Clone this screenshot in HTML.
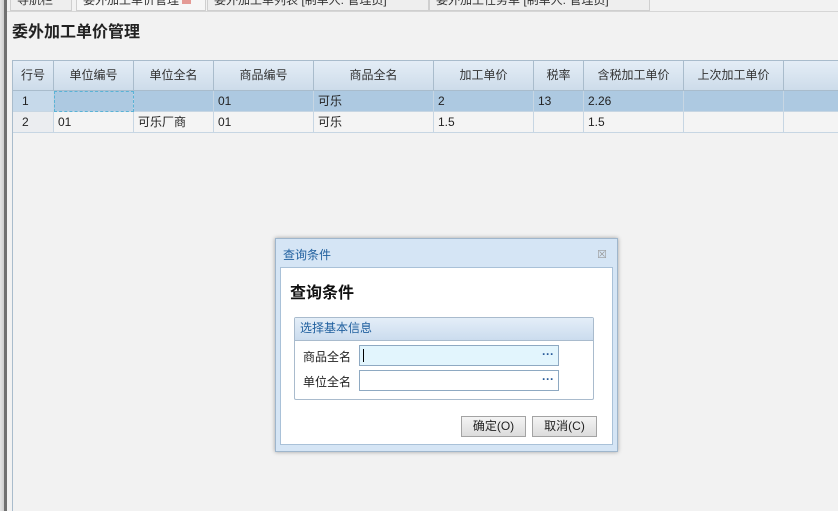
<!DOCTYPE html>
<html><head><meta charset="utf-8"><style>
*{margin:0;padding:0;box-sizing:border-box}
html,body{width:838px;height:511px;overflow:hidden}
body{background:#f2f2f2;font-family:"Liberation Sans","Noto Sans CJK SC",sans-serif;font-size:12px;color:#222;position:relative}
.abs{position:absolute}
.tab{position:absolute;top:-8px;height:19px;border:1px solid #cfcfcf;background:#eeeeee;font-size:12px;line-height:14px;color:#333;padding-left:6px;overflow:hidden;white-space:nowrap}
.grid{position:absolute;left:12px;top:60px;width:826px;height:451px;border-left:1px solid #a9bccc;border-top:1px solid #a9bccc}
.c{position:absolute;border-right:1px solid #c7d6e3;white-space:nowrap;overflow:hidden}
.h{top:0;height:30px;background:linear-gradient(#e4edf6,#cddcea);border-right:1px solid #a9bccc;border-bottom:1px solid #a9bccc;text-align:center;line-height:29px;color:#333}
.r1{top:30px;height:21px;background:#adc9e1;line-height:21px;padding-left:4px;border-bottom:1px solid #c7d6e3}
.r2{top:51px;height:21px;background:#f4f4f4;line-height:21px;padding-left:4px;border-bottom:1px solid #c7d6e3}
</style></head><body>
<div class="abs" style="left:0;top:0;width:5px;height:511px;background:linear-gradient(90deg,#e4e4e4,#c8c8c8)"></div>
<div class="abs" style="left:4px;top:0;width:3px;height:511px;background:#707070"></div>
<div class="tab" style="left:10px;width:62px">导航栏</div>
<div class="tab" style="left:76px;width:130px;background:#f6f6f6">委外加工单价管理 <span style="display:inline-block;width:9px;height:8px;background:#e49a95"></span></div>
<div class="tab" style="left:207px;width:222px">委外加工单列表 [制单人: 管理员]</div>
<div class="tab" style="left:429px;width:221px">委外加工任务单 [制单人: 管理员]</div>
<div class="abs" style="left:7px;top:11px;width:831px;height:1px;background:#d6d6d6"></div>
<div class="abs" style="left:12px;top:18px;font-size:16px;font-weight:bold;color:#222">委外加工单价管理</div>
<div class="grid">
<div class="c h" style="left:0;width:41px">行号</div>
<div class="c h" style="left:41px;width:80px">单位编号</div>
<div class="c h" style="left:121px;width:80px">单位全名</div>
<div class="c h" style="left:201px;width:100px">商品编号</div>
<div class="c h" style="left:301px;width:120px">商品全名</div>
<div class="c h" style="left:421px;width:100px">加工单价</div>
<div class="c h" style="left:521px;width:50px">税率</div>
<div class="c h" style="left:571px;width:100px">含税加工单价</div>
<div class="c h" style="left:671px;width:100px">上次加工单价</div>
<div class="c h" style="left:771px;width:60px"></div>
<div class="c r1" style="left:0;width:41px;background:#c6d9ea;padding-left:9px">1</div>
<div class="c r1" style="left:41px;width:80px;outline:1px dashed #5ab3d6;outline-offset:-1px"></div>
<div class="c r1" style="left:121px;width:80px"></div>
<div class="c r1" style="left:201px;width:100px">01</div>
<div class="c r1" style="left:301px;width:120px">可乐</div>
<div class="c r1" style="left:421px;width:100px">2</div>
<div class="c r1" style="left:521px;width:50px">13</div>
<div class="c r1" style="left:571px;width:100px">2.26</div>
<div class="c r1" style="left:671px;width:100px"></div>
<div class="c r1" style="left:771px;width:60px"></div>
<div class="c r2" style="left:0;width:41px;background:#ebedf0;padding-left:9px">2</div>
<div class="c r2" style="left:41px;width:80px">01</div>
<div class="c r2" style="left:121px;width:80px">可乐厂商</div>
<div class="c r2" style="left:201px;width:100px">01</div>
<div class="c r2" style="left:301px;width:120px">可乐</div>
<div class="c r2" style="left:421px;width:100px">1.5</div>
<div class="c r2" style="left:521px;width:50px"></div>
<div class="c r2" style="left:571px;width:100px">1.5</div>
<div class="c r2" style="left:671px;width:100px"></div>
<div class="c r2" style="left:771px;width:60px"></div>
</div>
<!-- dialog -->
<div class="abs" style="left:275px;top:238px;width:343px;height:214px;background:#d5e5f5;border:1px solid #9fb6cc;box-shadow:0 0 4px rgba(0,0,0,.35)">
<div class="abs" style="left:7px;top:7px;color:#1f5f9e;font-size:12px">查询条件</div>
<div class="abs" style="right:10px;top:9px;color:#999;font-size:11px">☒</div>
<div class="abs" style="left:4px;top:28px;width:333px;height:178px;background:#fff;border:1px solid #a9c1d8">
<div class="abs" style="left:9px;top:11px;font-size:16px;font-weight:bold;color:#111">查询条件</div>
<div class="abs" style="left:13px;top:49px;width:300px;height:83px;border:1px solid #a9bbcd;border-radius:2px">
<div style="height:23px;background:linear-gradient(#e4eef8,#cbdcee);border-bottom:1px solid #a9bbcd;line-height:21px;padding-left:5px;color:#1f5f9e">选择基本信息</div>
<div class="abs" style="left:8px;top:30px">商品全名</div>
<div class="abs" style="left:64px;top:27px;width:200px;height:21px;border:1px solid #8ea9c2;background:#e2f5fd"><div class="abs" style="left:3px;top:3px;width:1px;height:13px;background:#000"></div><span class="abs" style="right:4px;top:1px;color:#2a5c9a;font-weight:bold">···</span></div>
<div class="abs" style="left:8px;top:55px">单位全名</div>
<div class="abs" style="left:64px;top:52px;width:200px;height:21px;border:1px solid #8ea9c2;background:#fff"><span class="abs" style="right:4px;top:1px;color:#2a5c9a;font-weight:bold">···</span></div>
</div>
<div class="abs" style="left:180px;top:148px;width:65px;height:21px;border:1px solid #a3a3a3;background:linear-gradient(#f4f4f4,#dcdcdc);text-align:center;line-height:19px">确定(O)</div>
<div class="abs" style="left:251px;top:148px;width:65px;height:21px;border:1px solid #a3a3a3;background:linear-gradient(#f4f4f4,#dcdcdc);text-align:center;line-height:19px">取消(C)</div>
</div>
</div>
</body></html>
